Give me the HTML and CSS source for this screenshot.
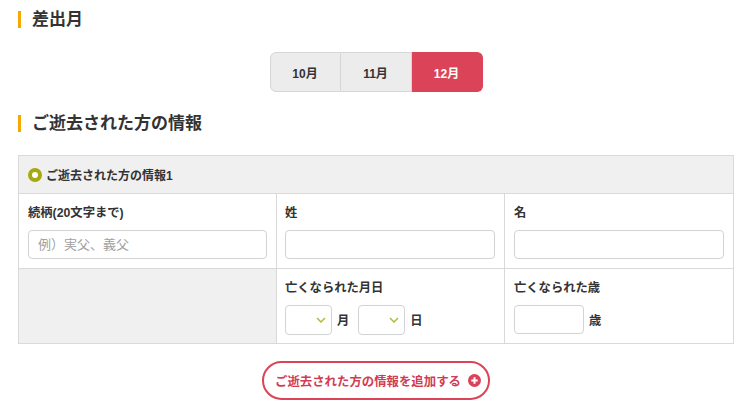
FILE: index.html
```html
<!DOCTYPE html>
<html lang="ja">
<head>
    <meta charset="UTF-8">
    <meta name="viewport" content="width=device-width, initial-scale=1.0">
    <title>ご逝去された方の情報</title>
    <link rel="stylesheet" href="styles.css">
</head>
<body>
    <div class="wrap">
        <h2 class="sec-title">差出月</h2>
        <div class="months">
            <button class="month">10月</button>
            <button class="month">11月</button>
            <button class="month active">12月</button>
        </div>

        <h2 class="sec-title second">ご逝去された方の情報</h2>
        <div class="form-table">
            <div class="form-head"><span class="dot"></span>ご逝去された方の情報1</div>

            <div class="cell">
                <label class="label">続柄(20文字まで)</label>
                <input class="text-input" type="text" placeholder="例）実父、義父">
            </div>
            <div class="cell">
                <label class="label">姓</label>
                <input class="text-input" type="text">
            </div>
            <div class="cell">
                <label class="label">名</label>
                <input class="text-input" type="text">
            </div>

            <div class="cell empty"></div>
            <div class="cell">
                <label class="label">亡くなられた月日</label>
                <div class="inline">
                    <div class="select-box">
                        <select><option></option></select>
                        <svg class="chev" width="10" height="6" viewBox="0 0 10 6"><path d="M1 1l4 4 4-4" fill="none" stroke="#b5b83a" stroke-width="1.5"/></svg>
                    </div>
                    <span class="unit">月</span>
                    <div class="select-box">
                        <select><option></option></select>
                        <svg class="chev" width="10" height="6" viewBox="0 0 10 6"><path d="M1 1l4 4 4-4" fill="none" stroke="#b5b83a" stroke-width="1.5"/></svg>
                    </div>
                    <span class="unit">日</span>
                </div>
            </div>
            <div class="cell">
                <label class="label">亡くなられた歳</label>
                <div class="inline">
                    <input class="age-input" type="text">
                    <span class="unit">歳</span>
                </div>
            </div>
        </div>

        <div class="add-row">
            <button class="add-btn">ご逝去された方の情報を追加する
                <svg width="13" height="13" viewBox="0 0 13 13"><circle cx="6.5" cy="6.5" r="6.5" fill="#d8435a"/><path d="M6.5 3.3v6.4M3.3 6.5h6.4" stroke="#fff" stroke-width="2"/></svg>
            </button>
        </div>
    </div>
</body>
</html>
```

FILE: styles.css
```css
body {
    margin: 0;
    padding: 0;
    background: #fff;
    color: #333;
    font-family: "Liberation Sans", "Noto Sans CJK JP", sans-serif;
}
.wrap {
    width: 716px;
    margin-left: 18px;
}
.sec-title {
    margin: 11px 0 0;
    padding-left: 11px;
    border-left: 3px solid #f5a800;
    font-size: 17px;
    line-height: 17px;
    height: 17px;
    font-weight: bold;
    color: #333;
}
.sec-title.second {
    margin-top: 23px;
}
.months {
    display: flex;
    justify-content: center;
    margin-top: 24px;
}
.month {
    width: 71px;
    height: 40px;
    border: 1px solid #d6d6d6;
    border-left: none;
    background: #ececec;
    color: #333;
    font-family: inherit;
    font-size: 12px;
    font-weight: bold;
    padding: 0;
}
.month:first-child {
    border-left: 1px solid #d6d6d6;
    border-radius: 6px 0 0 6px;
}
.month:last-child {
    border-radius: 0 6px 6px 0;
}
.month.active {
    background: #db4458;
    border-color: #db4458;
    color: #fff;
}
.form-table {
    display: grid;
    grid-template-columns: 257px 227px 228px;
    gap: 1px;
    background: #d9d9d9;
    border: 1px solid #d9d9d9;
    margin-top: 23px;
}
.form-head {
    grid-column: 1 / -1;
    height: 37px;
    background: #f0f0f0;
    display: flex;
    align-items: center;
    padding-left: 9px;
    font-size: 12px;
    font-weight: bold;
}
.dot {
    width: 6px;
    height: 6px;
    border: 4px solid #a5a912;
    background: #fff;
    border-radius: 50%;
    margin-right: 4px;
}
.cell {
    background: #fff;
    padding: 9px 9px 10px 9px;
    height: 55px;
}
.cell:nth-child(3),
.cell:nth-child(6) {
    padding-left: 8px;
}
.cell.empty {
    background: #f0f0f0;
}
.label {
    display: block;
    font-size: 12.3px;
    font-weight: bold;
    line-height: 20px;
    height: 20px;
    margin-bottom: 7px;
}
.text-input {
    display: block;
    box-sizing: border-box;
    width: 100%;
    height: 29px;
    border: 1px solid #d3d3d3;
    border-radius: 4px;
    padding: 0 9px;
    font-family: inherit;
    font-size: 13px;
    color: #333;
}
.text-input::placeholder {
    color: #a0a0a0;
}
.inline {
    display: flex;
    align-items: center;
}
.select-box {
    position: relative;
    width: 47px;
    height: 30px;
}
.select-box select {
    appearance: none;
    width: 100%;
    height: 100%;
    border: 1px solid #d3d3d3;
    border-radius: 4px;
    background: #fff;
}
.chev {
    position: absolute;
    right: 6px;
    top: 12px;
}
.unit {
    font-size: 12.3px;
    font-weight: bold;
    margin: 0 9px 0 5px;
}
.age-input {
    box-sizing: border-box;
    width: 70px;
    height: 29px;
    border: 1px solid #d3d3d3;
    border-radius: 4px;
}
.add-row {
    display: flex;
    justify-content: center;
    margin-top: 17px;
}
.add-btn {
    display: flex;
    align-items: center;
    gap: 7px;
    box-sizing: border-box;
    width: 228px;
    height: 39px;
    justify-content: center;
    border: 2px solid #db4458;
    border-radius: 20px;
    background: #fff;
    color: #d23c53;
    font-family: inherit;
    font-size: 12.4px;
    font-weight: bold;
    padding: 0 0 0 4px;
}
```
